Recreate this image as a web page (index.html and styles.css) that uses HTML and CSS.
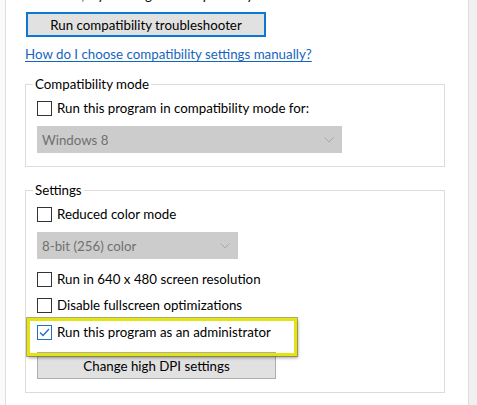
FILE: index.html
```html
<!DOCTYPE html>
<html lang="en">
<head>
<meta charset="utf-8">
<title>Compatibility</title>
<link rel="stylesheet" href="styles.css">
</head>
<body>
<div class="window">
  <div class="edge"></div>
  <div class="panel">
    <p class="intro">Windows, try running the compatibility troubleshooter.</p>
    <button class="btn btn-focus" type="button">Run compatibility troubleshooter</button>
    <a class="link" href="#">How do I choose compatibility settings manually?</a>

    <fieldset class="group group-compat">
      <legend>Compatibility mode</legend>
      <label class="check"><span class="box"></span><span>Run this program in compatibility mode for:</span></label>
      <div class="select select-wide"><span>Windows 8</span><svg class="chev" width="10" height="6" viewBox="0 0 10 6"><path d="M0.5 0.5 L5 5 L9.5 0.5" fill="none" stroke="#a8a8a8" stroke-width="1"/></svg></div>
    </fieldset>

    <fieldset class="group group-settings">
      <legend>Settings</legend>
      <label class="check"><span class="box"></span><span>Reduced color mode</span></label>
      <div class="select select-narrow"><span>8-bit (256) color</span><svg class="chev" width="10" height="6" viewBox="0 0 10 6"><path d="M0.5 0.5 L5 5 L9.5 0.5" fill="none" stroke="#a8a8a8" stroke-width="1"/></svg></div>
      <label class="check row-640"><span class="box"></span><span>Run in 640 x 480 screen resolution</span></label>
      <label class="check row-fs"><span class="box"></span><span>Disable fullscreen optimizations</span></label>
      <label class="check row-admin highlight"><span class="box checked"><svg width="13" height="13" viewBox="0 0 13 13"><path d="M2 6.5 L5 9.5 L11 3" fill="none" stroke="#1f6fc5" stroke-width="1.3"/></svg></span><span>Run this program as an administrator</span></label>
      <button class="btn btn-dpi" type="button">Change high DPI settings</button>
    </fieldset>
  </div>
  <div class="side"></div>
</div>
</body>
</html>
```

FILE: styles.css
```css
* { box-sizing: border-box; }
html, body { margin: 0; padding: 0; }
body {
  width: 477px;
  height: 405px;
  overflow: hidden;
  background: #f0f0f0;
  font-family: Lato, "Liberation Sans", Arial, sans-serif;
  font-size: 13.3px;
  color: #000;
}
.window {
  display: flex;
  height: 405px;
}
.edge {
  width: 5px;
  flex: none;
  background: #fafafa;
}
.panel {
  width: 464px;
  flex: none;
  background: #fff;
  border-left: 1px solid #dedede;
  border-right: 1px solid #dcdcdc;
  padding-left: 19px;
  display: flex;
  flex-direction: column;
  align-items: flex-start;
}
.side {
  flex: 1;
  background: #f0f0f0;
}
.intro {
  margin: -13px 0 0 1px;
  line-height: 16px;
  white-space: nowrap;
}
.btn {
  font: inherit;
  color: #000;
  background: #e1e1e1;
  padding: 0;
  line-height: 16px;
  cursor: default;
}
.btn-focus {
  margin: 9px 0 0 1px;
  width: 240px;
  height: 25px;
  border: 2px solid #0b78d4;
}
.link {
  margin-top: 9px;
  line-height: 16px;
  color: #1565c0;
  text-decoration: underline;
  text-underline-offset: 2px;
}
.group {
  margin: 14px 0 0 0;
  width: 420px;
  border: 1px solid #dcdcdc;
  padding: 8px 11px 13px 11px;
  display: flex;
  flex-direction: column;
  align-items: flex-start;
}
.group legend {
  margin-left: -4px;
  padding: 0 2px;
  line-height: 16px;
}
.group-settings { margin-top: 15px; }
.check {
  display: flex;
  align-items: center;
  height: 16px;
  line-height: 16px;
  white-space: nowrap;
}
.box {
  width: 15px;
  height: 15px;
  border: 1px solid #333;
  background: #fff;
  margin-right: 5px;
  flex: none;
  display: flex;
  align-items: center;
  justify-content: center;
}
.box.checked { border-color: #1f6fc5; }
.select {
  margin-top: 10px;
  height: 27px;
  background: #cccccc;
  color: #707070;
  display: flex;
  align-items: center;
  justify-content: space-between;
  padding: 0 8px 0 5px;
}
.select-wide { width: 305px; }
.select-narrow { width: 201px; }
.row-640 { margin-top: 12px; }
.row-fs { margin-top: 10px; }
.row-admin { margin-top: 11px; }
.highlight { position: relative; }
.highlight::after {
  content: "";
  position: absolute;
  left: -10px;
  top: -6px;
  width: 264px;
  height: 32px;
  border: 3px solid #e4e414;
  box-shadow: 0 0 0 1px rgba(110, 110, 0, 0.55), 1px 2px 3px rgba(0, 0, 0, 0.35);
  pointer-events: none;
}
.btn-dpi {
  margin-top: 12px;
  width: 239px;
  height: 27px;
  border: 1px solid #adadad;
}
```
